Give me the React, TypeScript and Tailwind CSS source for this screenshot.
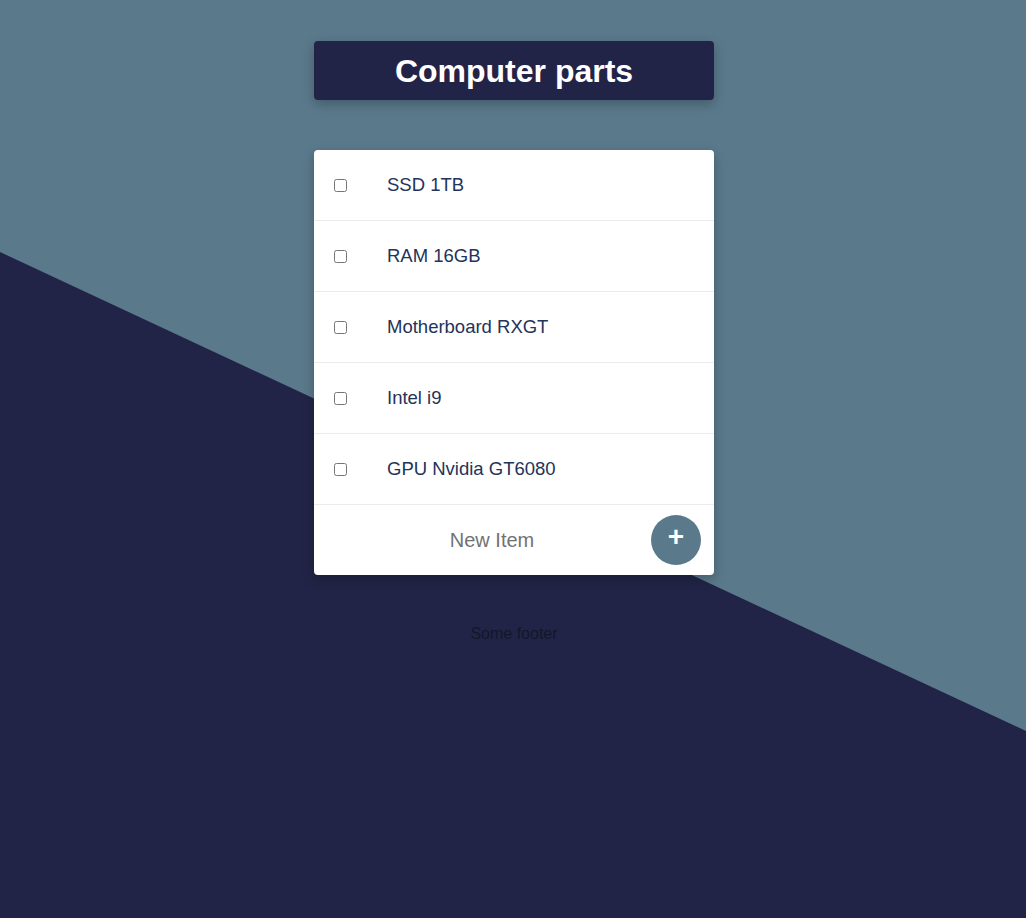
const items = ["SSD 1TB", "RAM 16GB", "Motherboard RXGT", "Intel i9", "GPU Nvidia GT6080"]

export default function App() {
  return (
    <div
      className="relative min-h-[918px] overflow-hidden bg-[#5a798b] pl-[2px]"
      style={{ fontFamily: '"Liberation Sans", Arial, sans-serif' }}
    >
      {/* diagonal background */}
      <div className="absolute inset-0 bg-[#222447] [clip-path:polygon(0_252px,100%_731px,100%_100%,0_100%)]"></div>

      <div className="relative mx-auto flex w-[400px] flex-col pt-[41px]">
        <h1 className="flex h-[59px] items-center justify-center rounded-[4px] bg-[#222447] text-[32px] font-bold text-white shadow-[0_4px_12px_rgba(0,0,0,0.25)]">
          Computer parts
        </h1>

        <div className="mt-[50px] overflow-hidden rounded-[4px] bg-white shadow-[0_4px_12px_rgba(0,0,0,0.25)]">
          {items.map((item) => (
            <label key={item} className="flex h-[71px] items-center border-b border-[#ebebeb]">
              <input type="checkbox" className="ml-[20px] h-[13px] w-[13px]" />
              <span className="ml-[40px] text-[18.5px] text-[#23335a]">{item}</span>
            </label>
          ))}
          <div className="relative flex h-[70px] items-center justify-center">
            <span className="-ml-[44px] text-[20px] text-[#727272]">New Item</span>
            <button className="absolute right-[13px] top-[10px] flex h-[50px] w-[50px] items-center justify-center rounded-full bg-[#5a798b] pb-[6px] text-[28px] font-bold text-white">
              +
            </button>
          </div>
        </div>

        <p className="mt-[47px] text-center text-[16px] text-[#14162b]">Some footer</p>
      </div>
    </div>
  )
}
